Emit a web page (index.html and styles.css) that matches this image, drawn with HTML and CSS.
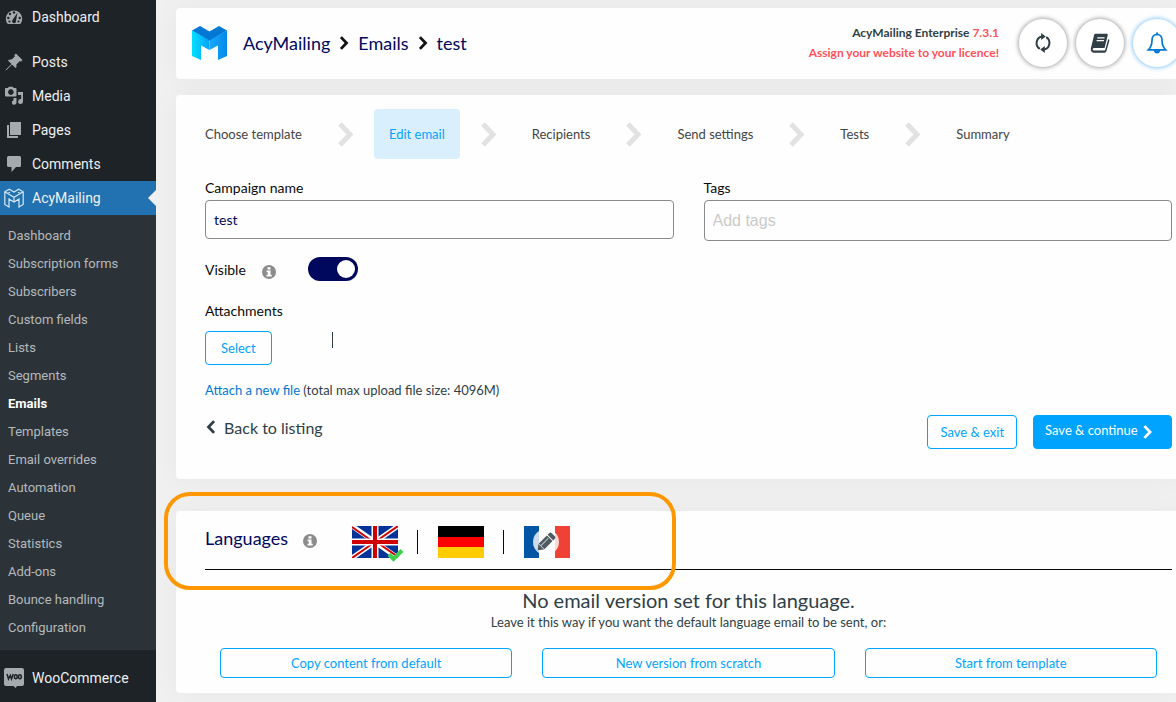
FILE: index.html
```html
<!DOCTYPE html>
<html lang="en">

	<head>
		<meta charset="UTF-8">
		<title>AcyMailing - Emails</title>
		<link rel="stylesheet" href="styles.css">
	</head>

	<body>
		<svg class="sprite">
			<symbol id="chevron" viewBox="0 0 15 25">
				<path d="M2 2L12 12.500L2 23" fill="none" stroke="currentColor" stroke-width="5" />
			</symbol>
			<symbol id="info" viewBox="0 0 14 14">
				<circle cx="7" cy="7" r="7" fill="#8c8c8c" />
				<path d="M5.500 2.200h3v2.300h-3zM4.600 5.600h3.900v4.200h1.200v1.700H4.500V9.800h1.300V7.200H4.600z" fill="#fff" />
			</symbol>
		</svg>

		<nav id="menu">
			<a class="item" href="#">
				<svg viewBox="0 0 20 20">
					<path d="M3.800 17A8.200 8.200 0 1 1 16.200 17z" />
					<g fill="#1d2327">
						<circle cx="10" cy="5.500" r="1.200" />
						<circle cx="6" cy="7" r="1.200" />
						<circle cx="4.300" cy="11" r="1.200" />
						<circle cx="15.700" cy="11" r="1.200" />
						<circle cx="5.500" cy="14.500" r="1.100" />
						<circle cx="14.500" cy="14.500" r="1.100" />
						<path d="M13.500 5.500L12 13.800a2 2 0 1 1-3.300-1z" />
					</g>
				</svg>
				Dashboard
			</a>
			<div class="sep"></div>
			<a class="item" href="#">
				<svg viewBox="0 0 20 20">
					<path d="M10.400 3L11.900 1.500L18.500 8.100L17 9.600L15.600 9.200L12.400 12.400Q13 14.800 11.500 16L8 12.500L2.800 17.800L1.200 18.800L2.200 17.200L7.500 12L4 8.500Q5.300 7 7.600 7.600L10.800 4.400z" />
				</svg>
				Posts
			</a>
			<a class="item" href="#">
				<svg viewBox="0 0 20 20">
					<path fill-rule="evenodd" d="M2 2h1.800L5 .8h3.500L9.800 2h1.700q1 0 1 1v6.500q0 1-1 1H2q-1 0-1-1V3q0-1 1-1zM6.800 3.300a2.800 2.800 0 1 0 .1 0zM14 6h5v9.500a2.400 2.400 0 1 1-1.800-2.300V9H14zM9.500 12h3v4.500a2.300 2.300 0 1 1-3-2.200z" />
				</svg>
				Media
			</a>
			<a class="item" href="#">
				<svg viewBox="0 0 20 20">
					<path d="M6 2h11v13H6zM3 5h2v11h9v2H3z" />
				</svg>
				Pages
			</a>
			<a class="item" href="#">
				<svg viewBox="0 0 20 20">
					<path d="M4.500 2h11Q17 2 17 3.500v8Q17 13 15.500 13H12L7.500 18v-5h-3Q3 13 3 11.500v-8Q3 2 4.500 2z" />
				</svg>
				Comments
			</a>
			<a class="item current" href="#">
				<svg viewBox="0 0 20 20">
					<path d="M.8 3.800L5.300 1.200L10 4L14.700 1.200L19.200 3.800V16.500L15 19V11L10 14L5 11V19L.8 16.500zM.8 3.800L10 9.300L19.200 3.800M10 9.300V14M3.800 5.500L6 4.200M16.200 5.500L14 4.200" fill="none" stroke="#d5e8f7" stroke-width="1.200" />
				</svg>
				AcyMailing
			</a>
			<div class="submenu">
				<a href="#">Dashboard</a>
				<a href="#">Subscription forms</a>
				<a href="#">Subscribers</a>
				<a href="#">Custom fields</a>
				<a href="#">Lists</a>
				<a href="#">Segments</a>
				<a class="on" href="#">Emails</a>
				<a href="#">Templates</a>
				<a href="#">Email overrides</a>
				<a href="#">Automation</a>
				<a href="#">Queue</a>
				<a href="#">Statistics</a>
				<a href="#">Add-ons</a>
				<a href="#">Bounce handling</a>
				<a href="#">Configuration</a>
			</div>
			<div class="sep"></div>
			<a class="item" href="#">
				<svg viewBox="0 0 20 20">
					<path d="M2 0h16q2 0 2 2v14q0 2-2 2h-5l-1.500 2L9.500 18H2q-2 0-2-2V2Q0 0 2 0z" />
					<g fill="none" stroke="#1d2327" stroke-width="1.500">
						<path d="M3 6L4.500 11L6.300 7.500L7.500 11L9.200 6" />
						<ellipse cx="11.800" cy="8.800" rx="1.400" ry="2" />
						<ellipse cx="15.900" cy="8.800" rx="1.400" ry="2" />
					</g>
				</svg>
				WooCommerce
			</a>
		</nav>

		<main id="content">
			<header class="panel header">
				<svg class="logo" viewBox="0 0 35 34">
					<defs>
						<linearGradient id="left"><stop offset="0" stop-color="#00e0ff" /><stop offset="1" stop-color="#00a3fd" /></linearGradient>
						<linearGradient id="right"><stop offset="0" stop-color="#1aa9ff" /><stop offset="1" stop-color="#0089ea" /></linearGradient>
					</defs>
					<path d="M0 4.500L17.500 14V24L9 19.500V34L0 30z" fill="url(#left)" />
					<path d="M35 4.500L17.500 14V24L26 19.500V34L35 30z" fill="url(#right)" />
					<path d="M0 4.500L8 0L17.500 5.500L27 0L35 4.500L17.500 14.500z" fill="#0078d4" />
				</svg>
				<div class="crumbs">
					<a href="#">AcyMailing</a>
					<svg><use href="#chevron" /></svg>
					<a href="#">Emails</a>
					<svg><use href="#chevron" /></svg>
					<a href="#">test</a>
				</div>
				<div class="version">
					<div>AcyMailing Enterprise <span class="red">7.3.1</span></div>
					<a class="red" href="#">Assign your website to your licence!</a>
				</div>
				<div class="rounds">
					<button class="round" aria-label="Refresh">
						<svg viewBox="0 0 24 24">
							<path d="M8.500 18.500A7.500 7.500 0 0 1 11 4.800M15.500 5.500A7.500 7.500 0 0 1 13 19.200" fill="none" stroke="#303f46" stroke-width="2.200" />
							<path d="M10 1L15 4.800L10 8.600zM14 15.400V23L9 19.200z" fill="#303f46" />
						</svg>
					</button>
					<button class="round" aria-label="Documentation">
						<svg viewBox="0 0 24 24">
							<path d="M7 2h12.500q1.300 0 1 1.300L17 17.500H5.500q-1.700 0-1.500 1.700q.2 1 1.500 1H17.500L21 7.500q1.500.5 1.200 2L19 21q-.5 1.500-2 1.500H5q-3.500-.5-3-4.500L5.500 3.500Q6 2 7 2z" fill="#303f46" />
							<path d="M9 6.500h8M8.300 9.500h8" stroke="#fff" stroke-width="1.300" />
						</svg>
					</button>
					<button class="round bell" aria-label="Notifications">
						<svg viewBox="0 0 24 24">
							<path d="M12 2.500Q6.500 3 6.500 9.500Q6.500 15.500 2.500 19.500H21.500Q17.500 15.500 17.500 9.500Q17.500 3 12 2.500z" fill="none" stroke="#0078d4" stroke-width="1.800" />
							<path d="M11 .5h2v3h-2zM8.500 20h7Q15 23.500 12 23.500T8.500 20z" fill="#0078d4" />
						</svg>
					</button>
				</div>
			</header>

			<section class="panel edit">
				<div class="steps">
					<a href="#">Choose template</a>
					<svg><use href="#chevron" /></svg>
					<a class="on" href="#">Edit email</a>
					<svg><use href="#chevron" /></svg>
					<a href="#">Recipients</a>
					<svg><use href="#chevron" /></svg>
					<a href="#">Send settings</a>
					<svg><use href="#chevron" /></svg>
					<a href="#">Tests</a>
					<svg><use href="#chevron" /></svg>
					<a href="#">Summary</a>
				</div>

				<div class="fields">
					<div class="field">
						<label for="name">Campaign name</label>
						<input type="text" id="name" value="test">
					</div>
					<div class="field">
						<label for="tags">Tags</label>
						<input type="text" id="tags" class="tags" placeholder="Add tags">
					</div>
				</div>

				<div class="visible">
					<label for="visible">Visible</label>
					<svg class="info"><use href="#info" /></svg>
					<input type="checkbox" id="visible" class="switch" checked>
				</div>

				<div class="label">Attachments</div>
				<div class="attach">
					<button class="btn select">Select</button>
					<span class="bar"></span>
				</div>
				<div class="upload"><a href="#">Attach a new file</a> (total max upload file size: 4096M)</div>

				<div class="actions">
					<a class="back" href="#">
						<svg viewBox="0 0 15 25"><path d="M13 2L3 12.500L13 23" fill="none" stroke="currentColor" stroke-width="5" /></svg>
						Back to listing
					</a>
					<button class="btn">Save &amp; exit</button>
					<button class="btn full">Save &amp; continue <svg><use href="#chevron" /></svg></button>
				</div>
			</section>

			<section class="panel languages">
				<div class="highlight"></div>
				<div class="langs">
					<h2>Languages</h2>
					<svg class="info"><use href="#info" /></svg>
					<button class="flag" aria-label="English">
						<svg viewBox="0 0 46 32">
							<path d="M0 0h46v32H0z" fill="#039" />
							<path d="M0 0L46 32M46 0L0 32" stroke="#fff" stroke-width="5" />
							<path d="M0 1L20 15M46 31L26 17M46 0L26 14M0 32L20 18" stroke="#d00000" stroke-width="2" />
							<path d="M23 0V32M0 16H46" stroke="#fff" stroke-width="7" />
							<path d="M23 0V32M0 16H46" stroke="#d00000" stroke-width="4" />
						</svg>
						<svg class="check" viewBox="0 0 17 14"><path d="M2 6.500L6.500 11L15 2.500" fill="none" stroke="#3dd04d" stroke-width="4" /></svg>
					</button>
					<span class="line"></span>
					<button class="flag" aria-label="German">
						<svg viewBox="0 0 46 32">
							<path d="M0 0h46v11H0z" />
							<path d="M0 11h46v10H0z" fill="#f00" />
							<path d="M0 21h46v11H0z" fill="#fc0" />
						</svg>
					</button>
					<span class="line"></span>
					<button class="flag" aria-label="French">
						<svg viewBox="0 0 46 32">
							<path d="M0 0h15v32H0z" fill="#0055a4" />
							<path d="M15 0h16v32H15z" fill="#fff" />
							<path d="M31 0h15v32H31z" fill="#ef4135" />
							<circle cx="22" cy="16" r="13" fill="#fff" fill-opacity=".8" />
							<g transform="translate(21.500 16.500) rotate(-45)" fill="#505b61">
								<path d="M-11 0L-6 -4V4z" />
								<path d="M-5.500 -4H6V4H-5.500zM7 -4H9.500Q11 -4 11 -2.500V2.500Q11 4 9.500 4H7z" />
								<path d="M-5 -1H5" stroke="#c8cdd0" />
							</g>
						</svg>
					</button>
				</div>
				<p class="title">No email version set for this language.</p>
				<p class="hint">Leave it this way if you want the default language email to be sent, or:</p>
				<div class="choices">
					<button class="btn">Copy content from default</button>
					<button class="btn">New version from scratch</button>
					<button class="btn">Start from template</button>
				</div>
			</section>
		</main>
	</body>

</html>
```

FILE: styles.css
```css
* {
	box-sizing: border-box;
}

body {
	display: flex;
	margin: 0;
	min-height: 100vh;
	background: #f0f0f1;
	color: #303f46;
	font: 13px/20px Lato, sans-serif;
}

a {
	color: inherit;
	text-decoration: none;
}

button,
input {
	font: inherit;
}

.sprite {
	position: absolute;
	width: 0;
	height: 0;
}

/* left menu */

#menu {
	flex: none;
	width: 156px;
	background: #1d2327;
	font-family: Roboto, sans-serif;
}

.item {
	display: flex;
	align-items: center;
	gap: 8px;
	height: 34px;
	padding-left: 4px;
	color: #f0f0f1;
	font-size: 14px;
}

.item svg {
	width: 20px;
	height: 20px;
	fill: #a7aaad;
}

.sep {
	height: 11px;
}

.current {
	position: relative;
	background: #2271b1;
}

.current::after {
	content: "";
	position: absolute;
	right: 0;
	top: 9px;
	border: 8px solid transparent;
	border-right-color: #f0f0f1;
	border-left: 0;
}

.submenu {
	padding: 7px 0 8px;
	background: #2c3338;
}

.submenu a {
	display: block;
	padding: 0 8px;
	color: #b4b9bd;
	line-height: 28px;
}

.submenu .on {
	color: #fff;
	font-weight: bold;
}

/* panels */

#content {
	flex: 1;
	min-width: 0;
	padding: 8px 0 8px 20px;
}

.panel {
	background: #fefefe;
	border-radius: 4px 0 0 4px;
	box-shadow: 0 0 30px rgba(0, 0, 0, .04);
}

.header {
	display: flex;
	align-items: center;
	height: 71px;
	padding: 0 0 2px 16px;
	margin-bottom: 16px;
	overflow: hidden;
}

.logo {
	width: 35px;
	height: 34px;
}

.crumbs {
	display: flex;
	align-items: center;
	gap: 9px;
	margin-left: 16px;
	color: #00085d;
	font-size: 18px;
}

.crumbs svg {
	width: 10px;
	height: 14px;
	color: #111;
}

.version {
	margin-left: auto;
	text-align: right;
	font-size: 12px;
	font-weight: bold;
}

.red {
	color: #ff5259;
}

.rounds {
	display: flex;
	gap: 9px;
	margin: 0 -5px 0 20px;
}

.round {
	display: flex;
	align-items: center;
	justify-content: center;
	width: 48px;
	height: 48px;
	padding: 0;
	border: 0;
	border-radius: 50%;
	background: #fff;
	box-shadow: 0 0 4px 1px rgba(0, 0, 0, .35);
}

.round svg {
	width: 22px;
	height: 22px;
}

.bell {
	box-shadow: 0 0 4px 1px #8cc8f8;
}

.edit {
	margin-bottom: 32px;
	padding: 14px 4px 30px 29px;
}

.steps {
	display: flex;
	align-items: center;
	gap: 20px;
	margin: 0 0 19px -15px;
}

.steps a {
	padding: 15px;
	border-radius: 4px;
	color: #444;
}

.steps .on {
	background: #daeffe;
	color: #00a4ff;
}

.steps svg {
	width: 17px;
	height: 25px;
	color: #e2e2e2;
}

.fields {
	display: grid;
	grid-template-columns: 1fr 1fr;
	align-items: start;
	gap: 30px;
}

.fields label,
.visible label,
.label {
	color: #0a0a0a;
	font-size: 14px;
}

.field label {
	display: block;
}

.field input {
	display: block;
	width: 100%;
	height: 39px;
	margin-top: 2px;
	padding: 0 8px;
	border: 1px solid #8a8a8a;
	border-radius: 4px;
	background: #fefefe;
	color: #00085d;
	font-size: 14px;
}

.field .tags {
	height: 41px;
	font: 16px "Liberation Sans", sans-serif;
}

.tags::placeholder {
	color: #cacaca;
}

.visible {
	display: flex;
	align-items: center;
	height: 24px;
	margin: 16px 0 20px;
}

.visible label {
	padding-top: 2px;
}

.info {
	width: 14px;
	height: 14px;
	margin: 5px 0 0 16px;
}

.switch {
	appearance: none;
	width: 50px;
	height: 24px;
	margin: 0 0 0 32px;
	padding: 3px;
	border-radius: 12px;
	background: #ccc;
}

.switch::before {
	content: "";
	display: block;
	width: 18px;
	height: 18px;
	border-radius: 50%;
	background: #fff;
}

.switch:checked {
	background: #00085d;
}

.switch:checked::before {
	margin-left: auto;
}

.btn {
	height: 34px;
	padding: 0 12px;
	border: 1px solid #00a4ff;
	border-radius: 4px;
	background: #fefefe;
	color: #00a4ff;
}

.attach {
	display: flex;
	margin: 10px 0 15px;
}

.select {
	padding: 0 15px;
}

.bar {
	width: 1px;
	height: 16px;
	margin: 1px 0 0 60px;
	background: #303f46;
}

.upload a {
	color: #0078d4;
}

.actions {
	display: flex;
	gap: 16px;
	margin-top: 15px;
}

.back {
	margin-right: auto;
	font-size: 16px;
	line-height: 26px;
}

.back svg {
	width: 12px;
	height: 14px;
	margin-right: 3px;
}

.full {
	padding: 0 19px 4px 11px;
	background: #00a4ff;
	color: #fff;
}

.full svg {
	width: 9px;
	height: 14px;
	margin-left: 2px;
	vertical-align: -4px;
}

/* languages */

.languages {
	position: relative;
	padding: 15px 4px 15px 29px;
	text-align: center;
}

.highlight {
	position: absolute;
	top: -19px;
	left: -12px;
	width: 512px;
	height: 98px;
	border: 4px solid #ff9800;
	border-radius: 26px;
	pointer-events: none;
}

.langs {
	display: flex;
	align-items: center;
	height: 44px;
	padding-bottom: 12px;
	border-bottom: 1px solid #0a0a0a;
}

h2 {
	margin: 0;
	padding-bottom: 8px;
	color: #00085d;
	font-size: 18px;
	font-weight: normal;
	line-height: 24px;
}

.langs .info {
	margin: 0 0 2px 15px;
}

.flag {
	position: relative;
	width: 46px;
	height: 32px;
	padding: 0;
	border: 0;
	background: none;
}

.info + .flag {
	margin-left: 35px;
}

.flag svg {
	display: block;
	width: 46px;
	height: 32px;
}

.flag .check {
	position: absolute;
	right: -6px;
	bottom: -4px;
	width: 17px;
	height: 14px;
}

.line {
	width: 1px;
	height: 24px;
	margin: 0 20px 0 19px;
	background: #0a0a0a;
}

.title {
	margin: 18px 0 0;
	font-size: 20px;
	line-height: 24px;
}

.hint {
	margin: 0 0 16px;
}

.choices {
	display: grid;
	grid-template-columns: repeat(3, 1fr);
	gap: 30px;
	padding: 0 15px;
}

.choices .btn {
	height: 30px;
}
```
